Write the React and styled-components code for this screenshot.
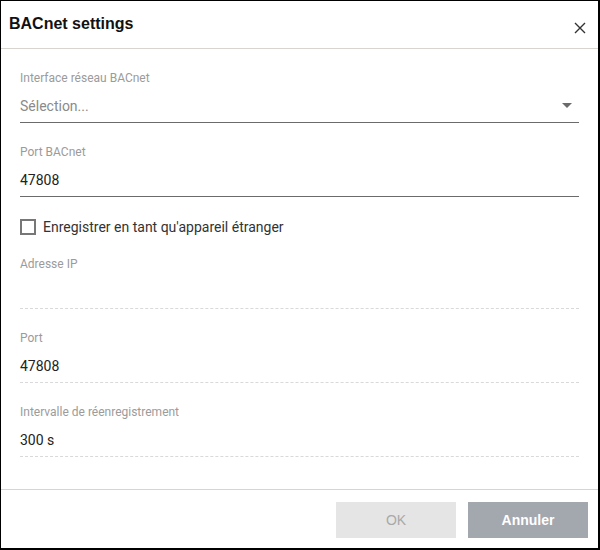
import React, { useState } from "react";
import styled, { createGlobalStyle } from "styled-components";

const GlobalStyle = createGlobalStyle`
  html, body {
    margin: 0;
    padding: 0;
    background: #ffffff;
  }
  * {
    box-sizing: border-box;
  }
`;

const App = () => {
  const [foreign, setForeign] = useState(false);

  return (
    <>
      <GlobalStyle />
      <Dialog>
        <Header>
          <Title>BACnet settings</Title>
          <CloseButton aria-label="close">
            <svg width="12" height="12" viewBox="0 0 12 12">
              <path d="M1 1 L11 11 M11 1 L1 11" stroke="#333" strokeWidth="1.4" />
            </svg>
          </CloseButton>
        </Header>

        <Body>
          <Field>
            <Label>Interface réseau BACnet</Label>
            <InputRow>
              <Value placeholder>Sélection...</Value>
              <Caret />
            </InputRow>
          </Field>

          <Field>
            <Label>Port BACnet</Label>
            <InputRow>
              <Value>47808</Value>
            </InputRow>
          </Field>

          <CheckRow onClick={() => setForeign(!foreign)}>
            <Box checked={foreign} />
            <CheckLabel>Enregistrer en tant qu'appareil étranger</CheckLabel>
          </CheckRow>

          <Field>
            <Label>Adresse IP</Label>
            <InputRow disabled>
              <Value></Value>
            </InputRow>
          </Field>

          <Field>
            <Label>Port</Label>
            <InputRow disabled>
              <Value>47808</Value>
            </InputRow>
          </Field>

          <Field>
            <Label>Intervalle de réenregistrement</Label>
            <InputRow disabled>
              <Value>300 s</Value>
            </InputRow>
          </Field>
        </Body>

        <Footer>
          <Button disabled>OK</Button>
          <Button secondary>Annuler</Button>
        </Footer>
      </Dialog>
    </>
  );
};

export default App;

const Dialog = styled.div`
  width: 600px;
  height: 550px;
  border: 1px solid #000;
  border-right-width: 2px;
  border-bottom-width: 2px;
  background: #fff;
  display: flex;
  flex-direction: column;
`;

const Header = styled.div`
  height: 48px;
  border-bottom: 1px solid #d8d5d0;
  display: flex;
  justify-content: space-between;
  align-items: flex-start;
  padding: 14px 12px 0 8px;
  flex-shrink: 0;
`;

const Title = styled.div`
  font-family: "Liberation Sans", Arial, sans-serif;
  font-weight: bold;
  font-size: 16px;
  line-height: 18px;
  color: #111;
`;

const CloseButton = styled.button`
  border: none;
  background: none;
  padding: 0;
  margin-top: 7px;
  width: 12px;
  height: 12px;
  display: flex;
  cursor: pointer;
`;

// Holds the form fields
const Body = styled.div`
  flex: 1;
  padding: 21px 19px 0 19px;
  display: flex;
  flex-direction: column;
  gap: 21px;
`;

const Field = styled.div`
  display: flex;
  flex-direction: column;
`;

const Label = styled.div`
  font-family: Roboto, "Liberation Sans", sans-serif;
  font-size: 12px;
  line-height: 16px;
  color: #9b9b9b;
`;

const InputRow = styled.div`
  display: flex;
  align-items: center;
  justify-content: space-between;
  height: 37px;
  padding: 3px 7px 0 0;
  border-bottom: 1px ${(p) => (p.disabled ? "dashed #d9d9d9" : "solid #6b6b6b")};
`;

const Value = styled.div`
  font-family: Roboto, "Liberation Sans", sans-serif;
  font-size: 14px;
  line-height: 24px;
  color: ${(p) => (p.placeholder ? "#8a8a8a" : "#222")};
`;

const Caret = styled.div`
  width: 0;
  height: 0;
  border-left: 5px solid transparent;
  border-right: 5px solid transparent;
  border-top: 5px solid #6b6b6b;
`;

const CheckRow = styled.div`
  display: flex;
  align-items: center;
  gap: 7px;
  height: 16px;
  margin-top: 1px;
  cursor: pointer;
`;

const Box = styled.div`
  width: 16px;
  height: 16px;
  border: 2px solid #777;
  background: ${(p) => (p.checked ? "#777" : "#fff")};
  flex-shrink: 0;
`;

const CheckLabel = styled.div`
  font-family: Roboto, "Liberation Sans", sans-serif;
  font-size: 14px;
  color: #333;
`;

const Footer = styled.div`
  height: 59px;
  flex-shrink: 0;
  border-top: 1px solid #d8d5d0;
  display: flex;
  justify-content: flex-end;
  align-items: flex-start;
  gap: 12px;
  padding: 12px 10px 0 0;
`;

const Button = styled.button`
  width: 120px;
  height: 36px;
  border: none;
  font-family: "Liberation Sans", Arial, sans-serif;
  font-size: 14px;
  font-weight: ${(p) => (p.secondary ? "bold" : "normal")};
  color: ${(p) => (p.secondary ? "#fff" : "#a9a9a9")};
  background: ${(p) => (p.secondary ? "#a3a7ae" : "#e5e5e5")};
  cursor: ${(p) => (p.disabled ? "default" : "pointer")};
`;
